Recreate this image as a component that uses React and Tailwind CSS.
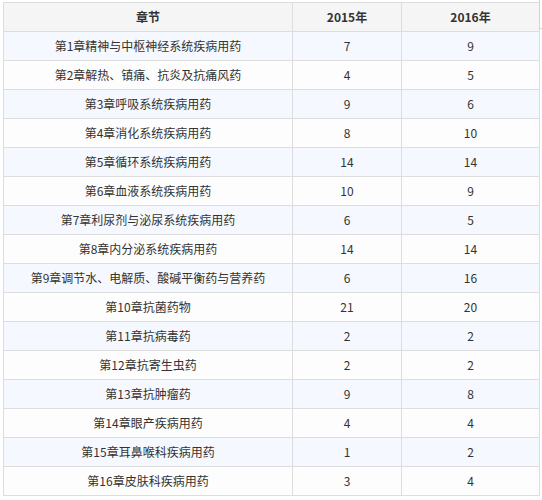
const rows = [
  ["第1章精神与中枢神经系统疾病用药", 7, 9],
  ["第2章解热、镇痛、抗炎及抗痛风药", 4, 5],
  ["第3章呼吸系统疾病用药", 9, 6],
  ["第4章消化系统疾病用药", 8, 10],
  ["第5章循环系统疾病用药", 14, 14],
  ["第6章血液系统疾病用药", 10, 9],
  ["第7章利尿剂与泌尿系统疾病用药", 6, 5],
  ["第8章内分泌系统疾病用药", 14, 14],
  ["第9章调节水、电解质、酸碱平衡药与营养药", 6, 16],
  ["第10章抗菌药物", 21, 20],
  ["第11章抗病毒药", 2, 2],
  ["第12章抗寄生虫药", 2, 2],
  ["第13章抗肿瘤药", 9, 8],
  ["第14章眼产疾病用药", 4, 4],
  ["第15章耳鼻喉科疾病用药", 1, 2],
  ["第16章皮肤科疾病用药", 3, 4],
];

export default function App() {
  return (
    <div
      className="relative w-[542px] h-[500px] bg-white pt-[2px] pl-[3px]"
      style={{ fontFamily: '"Microsoft YaHei", "Noto Sans CJK SC", sans-serif' }}
    >
      {/* scroll edge at the top right */}
      <div className="absolute left-[539px] top-0 h-[28px] w-px bg-[#d4d4d4]" />
      <div className="absolute left-[539px] top-[28px] h-px w-[3px] bg-[#d4d4d4]" />

      <table className="table-fixed border-collapse w-[536px] text-[12px] text-[#333]">
        <colgroup>
          <col className="w-[289px]" />
          <col className="w-[109px]" />
          <col className="w-[138px]" />
        </colgroup>
        <thead>
          <tr className="h-[29px] bg-[#f5f5f5]">
            <th className="border border-[#dddddd] font-bold text-center p-0">章节</th>
            <th className="border border-[#dddddd] font-bold text-center p-0">2015年</th>
            <th className="border border-[#dddddd] font-bold text-center p-0">2016年</th>
          </tr>
        </thead>
        <tbody>
          {rows.map((r, i) => (
            <tr
              key={r[0]}
              className={`h-[29px] ${i % 2 === 0 ? "bg-[#f5f9ff]" : "bg-[#fdfdfd]"}`}
            >
              <td className="border border-[#dddddd] text-center p-0 whitespace-nowrap">{r[0]}</td>
              <td className="border border-[#dddddd] text-center p-0">{r[1]}</td>
              <td className="border border-[#dddddd] text-center p-0">{r[2]}</td>
            </tr>
          ))}
        </tbody>
      </table>
    </div>
  );
}
